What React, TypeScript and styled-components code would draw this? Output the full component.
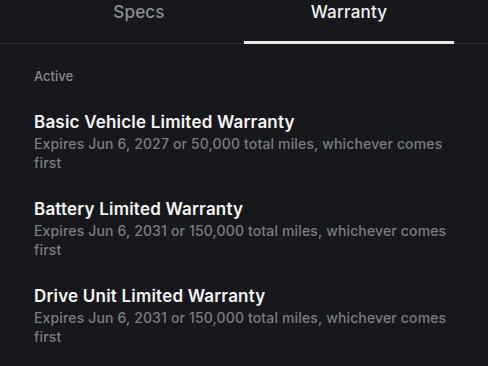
import React from 'react'
import styled, { createGlobalStyle } from 'styled-components'

const warranties = [
  { title: 'Basic Vehicle Limited Warranty', detail: 'Expires Jun 6, 2027 or 50,000 total miles, whichever comes first' },
  { title: 'Battery Limited Warranty', detail: 'Expires Jun 6, 2031 or 150,000 total miles, whichever comes first' },
  { title: 'Drive Unit Limited Warranty', detail: 'Expires Jun 6, 2031 or 150,000 total miles, whichever comes first' },
]

export default function App() {
  return (
    <>
      <GlobalStyle />
      <Page>
        <Tabs>
          <Tab>Specs</Tab>
          <Tab active>Warranty</Tab>
        </Tabs>

        <Content>
          <SectionLabel>Active</SectionLabel>
          {warranties.map((w) => (
            <Item key={w.title}>
              <Title>{w.title}</Title>
              <Detail>{w.detail}</Detail>
            </Item>
          ))}
        </Content>
      </Page>
    </>
  )
}

const GlobalStyle = createGlobalStyle`
  html, body {
    margin: 0;
    background: #17181b;
  }
  body {
    font-family: Inter, "Open Sans", sans-serif;
    -webkit-font-smoothing: antialiased;
  }
`

const Page = styled.div`
  width: 488px;
  height: 366px;
  overflow: hidden;
  background: #17181b;
`

const Tabs = styled.div`
  display: flex;
  height: 43px;
  padding: 0 34px;
  border-bottom: 1px solid #2e2f33;
`

const Tab = styled.div<{ active?: boolean }>`
  flex: 1;
  display: flex;
  justify-content: center;
  align-items: flex-start;
  line-height: 24px;
  font-size: 17px;
  font-weight: 500;
  letter-spacing: 0.2px;
  color: ${({ active }) => (active ? '#f2f2f2' : '#8b8c8f')};
  box-shadow: ${({ active }) => (active ? 'inset 0 -3px 0 #e8e8e8' : 'none')};
  margin-bottom: -1px;
`

const Content = styled.div`
  padding: 23px 34px 0;
  width: 420px;
`

const SectionLabel = styled.div`
  font-size: 13px;
  font-weight: 500;
  color: #8a8b8e;
  line-height: 18px;
  margin-bottom: 26px;
`

const Item = styled.div`
  display: flex;
  flex-direction: column;
  gap: 1px;
  margin-bottom: 26px;
`

const Title = styled.div`
  font-size: 17px;
  font-weight: 600;
  color: #f4f4f5;
  line-height: 22px;
  letter-spacing: 0.2px;
`

const Detail = styled.div`
  font-size: 14px;
  font-weight: 500;
  color: #7b7c80;
  line-height: 19px;
  letter-spacing: 0.15px;
`
